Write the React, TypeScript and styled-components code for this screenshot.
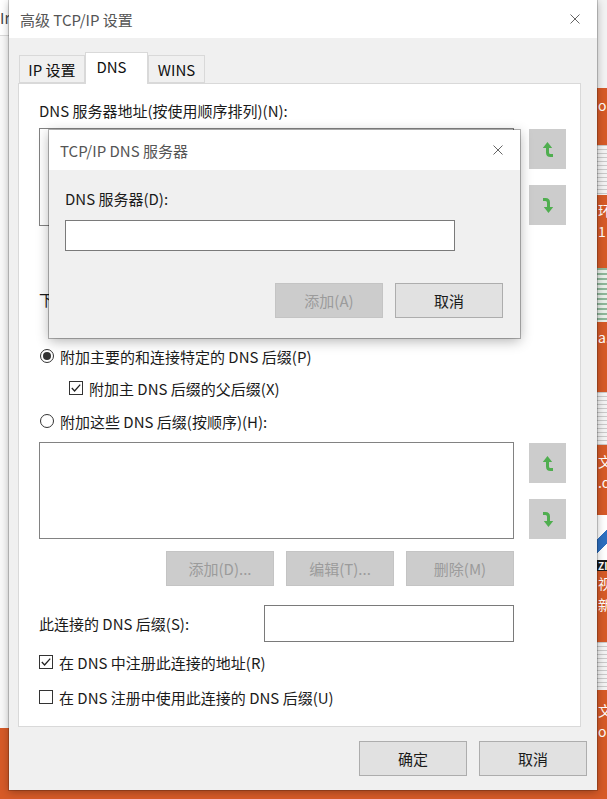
import React from 'react';
import styled, { createGlobalStyle } from 'styled-components';

const GlobalStyle = createGlobalStyle`
  * { box-sizing: border-box; }
  body {
    margin: 0;
    font-family: "Noto Sans CJK SC", "Noto Sans", sans-serif;
  }
`;

const Page = styled.div`
  width: 607px;
  height: 799px;
  display: flex;
  background: #d65a28;
  overflow: hidden;
`;

const LeftStrip = styled.div`
  width: 9px;
  height: 728px;
  flex-shrink: 0;
  background: #f8f8f8;
  overflow: hidden;
`;

const LeftTop = styled.div`
  height: 36px;
  background: #fff;
  border-bottom: 1px solid #dadada;
  font-size: 15px;
  line-height: 36px;
  color: #444;
  white-space: nowrap;
`;

const RightStrip = styled.div`
  width: 10px;
  flex-shrink: 0;
  display: flex;
  flex-direction: column;
  overflow: hidden;
`;

type StripKind = 'light' | 'orange' | 'stripe' | 'green' | 'blue' | 'black';

const StripBlock = styled.div<{ $kind: StripKind; $h: number; $pt?: number }>`
  height: ${(p) => p.$h}px;
  flex-shrink: 0;
  padding-top: ${(p) => p.$pt ?? 0}px;
  padding-left: 1px;
  font-size: 14px;
  line-height: 21px;
  white-space: nowrap;
  color: #fff;
  background: ${(p) =>
    p.$kind === 'light'
      ? '#f2f2f2'
      : p.$kind === 'orange'
      ? '#d65a28'
      : p.$kind === 'stripe'
      ? 'repeating-linear-gradient(to bottom, #c9c9c9 0 1px, #f3f3f3 1px 4px)'
      : p.$kind === 'green'
      ? 'repeating-linear-gradient(to bottom, #8fb79a 0 2px, #e9efe9 2px 5px)'
      : p.$kind === 'blue'
      ? 'linear-gradient(135deg, #ffffff 0 45%, #2c6fc0 45% 70%, #ffffff 70%)'
      : '#1b1b1b'};
  ${(p) => p.$kind === 'black' && 'font-size: 10px; line-height: 11px; font-weight: bold;'}
`;

const Dialog = styled.div`
  position: relative;
  width: 588px;
  height: 790px;
  flex-shrink: 0;
  display: flex;
  flex-direction: column;
  background: #f0f0f0;
  box-shadow: 0 0 0 1px rgba(0, 0, 0, 0.18), 0 2px 8px rgba(0, 0, 0, 0.3);
  z-index: 1;
`;

const TitleBar = styled.div<{ $h: number }>`
  height: ${(p) => p.$h}px;
  flex-shrink: 0;
  background: #fff;
  display: flex;
  align-items: center;
  justify-content: space-between;
  padding: 0 17px 0 11px;
  font-size: 15px;
  color: #555;
`;

const Body = styled.div`
  flex: 1;
  display: flex;
  flex-direction: column;
  padding: 14px 16px 0 9px;
`;

const TabRow = styled.div`
  height: 31px;
  display: flex;
  align-items: flex-end;
  padding-left: 1px;
`;

const Tab = styled.div<{ $active?: boolean; $w: number }>`
  position: relative;
  z-index: ${(p) => (p.$active ? 2 : 0)};
  width: ${(p) => p.$w}px;
  height: ${(p) => (p.$active ? 32 : 28)}px;
  margin-bottom: ${(p) => (p.$active ? -1 : 0)}px;
  padding-right: ${(p) => (p.$active ? 10 : 0)}px;
  padding-bottom: ${(p) => (p.$active ? 4 : 0)}px;
  display: flex;
  align-items: center;
  justify-content: center;
  background: ${(p) => (p.$active ? '#fff' : '#f0f0f0')};
  border: 1px solid #d9d9d9;
  border-bottom: ${(p) => (p.$active ? 'none' : '1px solid #d9d9d9')};
  font-size: 15px;
  color: #111;
`;

const Panel = styled.div`
  position: relative;
  z-index: 1;
  height: 644px;
  background: #fff;
  border: 1px solid #d9d9d9;
  padding: 0 14px 0 20px;
  display: flex;
  flex-direction: column;
`;

const Label = styled.div<{ $mt: number }>`
  margin-top: ${(p) => p.$mt}px;
  height: 20px;
  line-height: 20px;
  font-size: 15px;
  color: #1b1b1b;
  white-space: nowrap;
`;

const ClippedLabel = styled(Label)`
  width: 475px;
  overflow: hidden;
`;

const ListRow = styled.div<{ $mt: number }>`
  margin-top: ${(p) => p.$mt}px;
  display: flex;
  gap: 15px;
`;

const ListBox = styled.div<{ $h: number }>`
  width: 475px;
  height: ${(p) => p.$h}px;
  background: #fff;
  border: 1px solid #828282;
`;

const MoveColumn = styled.div`
  display: flex;
  flex-direction: column;
  gap: 16px;
  padding-top: 1px;
`;

const MoveButton = styled.div`
  width: 37px;
  height: 40px;
  background: #cccccc;
  display: flex;
  align-items: center;
  justify-content: center;
`;

const ButtonRow = styled.div<{ $mt: number; $w?: number }>`
  margin-top: ${(p) => p.$mt}px;
  width: ${(p) => (p.$w ? `${p.$w}px` : 'auto')};
  display: flex;
  justify-content: flex-end;
  gap: 12px;
`;

const Button = styled.div<{ $disabled?: boolean }>`
  width: 108px;
  height: 35px;
  display: flex;
  align-items: center;
  justify-content: center;
  font-size: 15px;
  background: ${(p) => (p.$disabled ? '#cccccc' : '#e1e1e1')};
  border: 1px solid ${(p) => (p.$disabled ? '#c4c4c4' : '#adadad')};
  color: ${(p) => (p.$disabled ? '#9b9b9b' : '#1b1b1b')};
`;

const OptionRow = styled.div<{ $mt: number; $indent?: number }>`
  margin-top: ${(p) => p.$mt}px;
  margin-left: ${(p) => p.$indent ?? 0}px;
  height: 20px;
  display: flex;
  align-items: center;
  gap: 6px;
  font-size: 15px;
  color: #1b1b1b;
  white-space: nowrap;
`;

const Radio = styled.span<{ $checked?: boolean }>`
  width: 14px;
  height: 14px;
  margin-left: 1px;
  border-radius: 50%;
  border: 1px solid #333;
  background: #fff;
  display: flex;
  align-items: center;
  justify-content: center;
  &::after {
    content: '';
    width: 8px;
    height: 8px;
    border-radius: 50%;
    background: ${(p) => (p.$checked ? '#333' : 'transparent')};
  }
`;

const CheckBox = styled.span`
  width: 14px;
  height: 14px;
  border: 1px solid #333;
  background: #fff;
  display: flex;
  align-items: center;
  justify-content: center;
`;

const SuffixRow = styled.div<{ $mt: number }>`
  margin-top: ${(p) => p.$mt}px;
  width: 475px;
  display: flex;
  align-items: center;
  justify-content: space-between;
  font-size: 15px;
  color: #1b1b1b;
`;

const TextInput = styled.div<{ $w: number; $h: number }>`
  width: ${(p) => p.$w}px;
  height: ${(p) => p.$h}px;
  background: #fff;
  border: 1px solid #7a7a7a;
`;

const Footer = styled.div`
  display: flex;
  justify-content: flex-end;
  gap: 12px;
  padding: 14px 0;
  margin-right: -6px;
`;

const SubDialog = styled.div`
  position: absolute;
  left: 40px;
  top: 130px;
  z-index: 5;
  width: 471px;
  height: 208px;
  display: flex;
  flex-direction: column;
  background: #f0f0f0;
  box-shadow: 0 0 0 1px rgba(0, 0, 0, 0.28), 0 3px 12px rgba(0, 0, 0, 0.3);
`;

const SubBody = styled.div`
  flex: 1;
  display: flex;
  flex-direction: column;
  padding: 0 17px 0 16px;
`;

const GREEN = '#4fae4f';

const CloseIcon = () => (
  <svg width="10" height="10" viewBox="0 0 10 10">
    <path d="M0.5 0.5 L9.5 9.5 M9.5 0.5 L0.5 9.5" stroke="#666" strokeWidth="1" fill="none" />
  </svg>
);

const UpIcon = () => (
  <svg width="12" height="17" viewBox="0 0 12 17">
    <path d="M5.5 1 L0.8 7 H10.2 Z" fill={GREEN} />
    <path d="M5.5 6 V11.5 Q5.5 14.5 8.5 14.5 H11" stroke={GREEN} strokeWidth="3" fill="none" />
  </svg>
);

const DownIcon = () => (
  <svg width="12" height="17" viewBox="0 0 12 17">
    <path d="M1 2.5 H3.5 Q6.5 2.5 6.5 5.5 V11" stroke={GREEN} strokeWidth="3" fill="none" />
    <path d="M6.5 16 L1.8 10 H11.2 Z" fill={GREEN} />
  </svg>
);

const Tick = () => (
  <svg width="12" height="12" viewBox="0 0 12 12">
    <path d="M1.8 6 L4.6 9 L10.2 2.6" stroke="#222" strokeWidth="1.3" fill="none" />
  </svg>
);

const MoveButtons: React.FC = () => (
  <MoveColumn>
    <MoveButton>
      <UpIcon />
    </MoveButton>
    <MoveButton>
      <DownIcon />
    </MoveButton>
  </MoveColumn>
);

const EditButtons: React.FC<{ mt: number }> = ({ mt }) => (
  <ButtonRow $mt={mt} $w={475}>
    <Button $disabled>添加(D)...</Button>
    <Button $disabled>编辑(T)...</Button>
    <Button $disabled>删除(M)</Button>
  </ButtonRow>
);

const stripBlocks: { kind: StripKind; h: number; pt?: number; text?: string[] }[] = [
  { kind: 'light', h: 88 },
  { kind: 'orange', h: 57, pt: 7, text: ['o'] },
  { kind: 'stripe', h: 50 },
  { kind: 'orange', h: 73, pt: 5, text: ['环', '1'] },
  { kind: 'green', h: 54 },
  { kind: 'orange', h: 70, pt: 5, text: ['a.'] },
  { kind: 'stripe', h: 53 },
  { kind: 'orange', h: 70, pt: 6, text: ['文', '.d'] },
  { kind: 'blue', h: 45 },
  { kind: 'black', h: 11, text: ['ZI'] },
  { kind: 'orange', h: 71, pt: 2, text: ['视', '新'] },
  { kind: 'stripe', h: 48 },
  { kind: 'orange', h: 120, pt: 10, text: ['文', 'o'] },
];

const App: React.FC = () => {
  return (
    <>
      <GlobalStyle />
      <Page>
        <LeftStrip>
          <LeftTop>Ir</LeftTop>
        </LeftStrip>

        <Dialog>
          <TitleBar $h={38}>
            <span>高级 TCP/IP 设置</span>
            <CloseIcon />
          </TitleBar>

          <Body>
            <TabRow>
              <Tab $w={66}>IP 设置</Tab>
              <Tab $w={63} $active>
                DNS
              </Tab>
              <Tab $w={57}>WINS</Tab>
            </TabRow>

            <Panel>
              <Label $mt={17}>DNS 服务器地址(按使用顺序排列)(N):</Label>
              <ListRow $mt={7}>
                <ListBox $h={98} />
                <MoveButtons />
              </ListRow>
              <EditButtons mt={11} />
              <ClippedLabel $mt={18}>
                下列三个设置应用于所有启用 TCP/IP 的连接。要解析不合格的名称:
              </ClippedLabel>

              <OptionRow $mt={36}>
                <Radio $checked />
                附加主要的和连接特定的 DNS 后缀(P)
              </OptionRow>
              <OptionRow $mt={12} $indent={30}>
                <CheckBox>
                  <Tick />
                </CheckBox>
                附加主 DNS 后缀的父后缀(X)
              </OptionRow>
              <OptionRow $mt={13}>
                <Radio />
                附加这些 DNS 后缀(按顺序)(H):
              </OptionRow>

              <ListRow $mt={11}>
                <ListBox $h={97} />
                <MoveButtons />
              </ListRow>
              <EditButtons mt={12} />

              <SuffixRow $mt={19}>
                <span>此连接的 DNS 后缀(S):</span>
                <TextInput $w={250} $h={37} />
              </SuffixRow>

              <OptionRow $mt={10}>
                <CheckBox>
                  <Tick />
                </CheckBox>
                在 DNS 中注册此连接的地址(R)
              </OptionRow>
              <OptionRow $mt={15}>
                <CheckBox />
                在 DNS 注册中使用此连接的 DNS 后缀(U)
              </OptionRow>
            </Panel>

            <Footer>
              <Button>确定</Button>
              <Button>取消</Button>
            </Footer>
          </Body>

          <SubDialog>
            <TitleBar $h={40}>
              <span>TCP/IP DNS 服务器</span>
              <CloseIcon />
            </TitleBar>
            <SubBody>
              <Label $mt={19}>DNS 服务器(D):</Label>
              <TextInput $w={390} $h={31} style={{ marginTop: 11 }} />
              <ButtonRow $mt={32}>
                <Button $disabled>添加(A)</Button>
                <Button>取消</Button>
              </ButtonRow>
            </SubBody>
          </SubDialog>
        </Dialog>

        <RightStrip>
          {stripBlocks.map((b, i) => (
            <StripBlock key={i} $kind={b.kind} $h={b.h} $pt={b.pt}>
              {b.text?.map((t) => (
                <div key={t}>{t}</div>
              ))}
            </StripBlock>
          ))}
        </RightStrip>
      </Page>
    </>
  );
};

export default App;
